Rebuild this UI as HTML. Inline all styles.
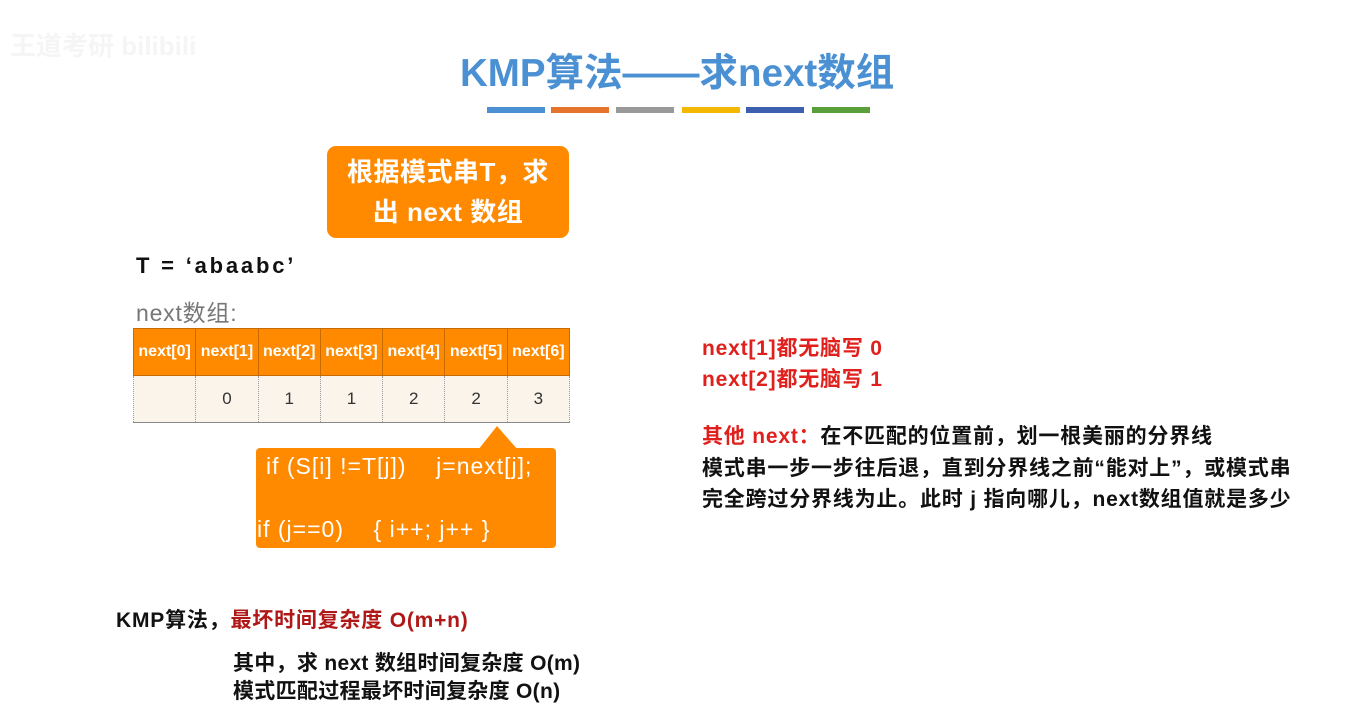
<!DOCTYPE html>
<html><head><meta charset="utf-8"><style>
body{margin:0;width:1347px;height:708px;background:#fff;position:relative;overflow:hidden;font-family:"Liberation Sans","Noto Sans CJK SC",sans-serif}
.a{position:absolute;white-space:nowrap}
.b{font-weight:bold}
table{position:absolute;left:133px;top:328px;border-collapse:collapse;width:437px;table-layout:fixed}
td{height:46px;text-align:center;font-size:17px;padding:0}
tr.h td{background:#ff8a00;color:#fff;font-weight:bold;border:1px solid #c76a00;font-size:16px}
tr.v td{background:#fbf4ea;color:#333;border-left:1px dotted #999;border-right:1px dotted #999;border-bottom:1px solid #888}
.r{color:#e0201c}
</style></head><body>
<div class="a" style="left:10px;top:26px;font-size:26px;color:#f5f5f5;font-weight:bold">王道考研 bilibili</div>
<div class="a b" style="left:460px;top:42px;font-size:38.5px;color:#4a90d2">KMP算法——求next数组</div>
<div class="a" style="left:487px;top:107px;width:58px;height:6px;background:#4a90d2"></div>
<div class="a" style="left:551px;top:107px;width:58px;height:6px;background:#e5732b"></div>
<div class="a" style="left:616px;top:107px;width:58px;height:6px;background:#999"></div>
<div class="a" style="left:682px;top:107px;width:58px;height:6px;background:#f5b800"></div>
<div class="a" style="left:746px;top:107px;width:58px;height:6px;background:#3c5fb0"></div>
<div class="a" style="left:812px;top:107px;width:58px;height:6px;background:#5aa03a"></div>
<div class="a b" style="left:327px;top:146px;width:242px;height:92px;background:#ff8a00;border-radius:9px;color:#fff;font-size:26px;letter-spacing:0.5px;text-align:center;line-height:40px;padding-top:6px;box-sizing:border-box">根据模式串T，求<br>出 next 数组</div>
<div class="a b" style="left:136px;top:253px;font-size:22px;letter-spacing:2.8px;color:#111">T = ‘abaabc’</div>
<div class="a" style="left:136px;top:294px;font-size:23px;letter-spacing:0.8px;color:#777">next数组:</div>
<table><tr class="h"><td>next[0]</td><td>next[1]</td><td>next[2]</td><td>next[3]</td><td>next[4]</td><td>next[5]</td><td>next[6]</td></tr>
<tr class="v"><td></td><td>0</td><td>1</td><td>1</td><td>2</td><td>2</td><td>3</td></tr></table>
<svg class="a" style="left:470px;top:426px" width="50" height="24"><polygon points="27,0 48,24 8,24" fill="#ff8a00"/></svg>
<div class="a" style="left:256px;top:448px;width:300px;height:100px;background:#ff8a00;border-radius:4px;color:#fff;font-size:23px;letter-spacing:1px">
<div class="a" style="left:10px;top:5px">if (S[i] !=T[j])&nbsp;&nbsp;&nbsp;&nbsp;j=next[j];</div>
<div class="a" style="left:1px;top:68px">if (j==0)&nbsp;&nbsp;&nbsp;&nbsp;{ i++; j++ }</div></div>
<div class="a b r" style="left:702px;top:333px;font-size:21px;letter-spacing:0.8px;line-height:31px">next[1]都无脑写 0<br>next[2]都无脑写 1</div>
<div class="a b" style="left:702px;top:421px;font-size:21px;letter-spacing:0.8px;line-height:31.5px;color:#111"><span class="r">其他 next：</span>在不匹配的位置前，划一根美丽的分界线<br>模式串一步一步往后退，直到分界线之前“能对上”，或模式串<br>完全跨过分界线为止。此时 j 指向哪儿，next数组值就是多少</div>
<div class="a b" style="left:116px;top:604px;font-size:21px;letter-spacing:0.8px;color:#111">KMP算法，<span style="color:#b01818">最坏时间复杂度 O(m+n)</span></div>
<div class="a b" style="left:233px;top:650px;font-size:21px;letter-spacing:0.3px;line-height:28px;color:#111">其中，求 next 数组时间复杂度 O(m)<br>模式匹配过程最坏时间复杂度 O(n)</div>
</body></html>
